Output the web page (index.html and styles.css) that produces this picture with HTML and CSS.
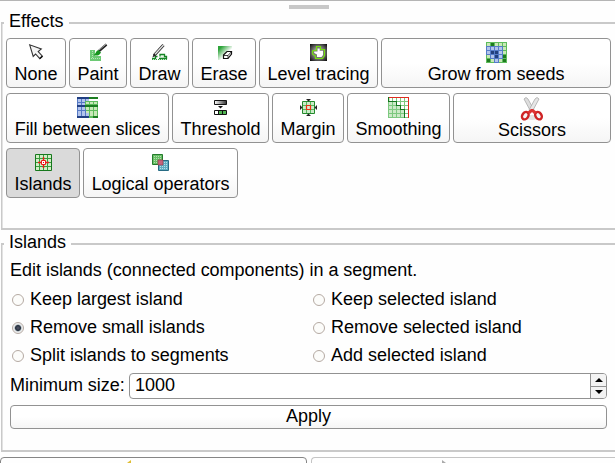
FILE: index.html
```html
<!DOCTYPE html>
<html lang="en">
<head>
<meta charset="utf-8">
<title>Segment effects</title>
<link rel="stylesheet" href="styles.css">
</head>
<body>
<div class="splitter"><span class="grip"></span></div>

<section class="group effects">
  <h2 class="legend">Effects</h2>
  <div class="row r1">
    <button class="tool"><svg width="26" height="25"><path d="M6.7 5.8L10.2 17.5L12.6 15L16.8 19.6L19.4 17.2L15.2 12.6L18.3 10Z" fill="#f4f4f4" stroke="#333" stroke-width="1.1"/><path d="M16.8 19.6L19.4 17.2" stroke="#111" stroke-width="1.4"/></svg>None</button>
    <button class="tool"><svg width="26" height="25"><path d="M5 11H10V17H16V22H5Z" fill="#6cc974"/><path d="M7.5 12V20M6 19.5H16" stroke="#b5e5b5" stroke-dasharray="1 1"/><path d="M14 12L21.5 5.5" stroke="#222" stroke-width="2.4"/><path d="M14 11L21 5.2" stroke="#c9c9c9" stroke-width=".8"/><path d="M8.5 16C11 15 10.7 12 13.3 11L16 13.5C14 17 11.5 17 8.5 16Z" fill="#16931e"/></svg>Paint</button>
    <button class="tool"><svg width="25" height="25"><path d="M5 19.5H8.5V17.5H10.5M13 17.5V15.5H17.5V17.5H19.5V19.5H12" fill="#eaf8e9" stroke="#168526" stroke-width="1.3"/><path d="M5 20.5H20" stroke="#34a542" stroke-dasharray="1 1"/><path d="M7 16.5L16.5 6" stroke="#222" stroke-width="2.8"/><path d="M8 15.2L16.5 6" stroke="#e4e4e4" stroke-width="1.4"/><path d="M5.5 18.2L6.5 15.5L8.5 17Z" fill="#222"/></svg>Draw</button>
    <button class="tool"><svg width="26" height="25"><defs><linearGradient id="erase" x2="1" y2="1"><stop offset=".15" stop-color="#2ea43a"/><stop offset=".6" stop-color="#fff"/></linearGradient></defs><path d="M7 7H21V12L14 21H7Z" fill="url(#erase)"/><path d="M12.5 16L16 12.5H20.5V15L17 19.5H12.5Z" fill="#fff" stroke="#111" stroke-width="1.2"/><path d="M12.5 16.5H17L20.5 12.7M17 16.5V19" fill="none" stroke="#111" stroke-width=".8"/></svg>Erase</button>
    <button class="tool"><svg width="25" height="25"><defs><radialGradient id="trace" r=".7"><stop offset=".35" stop-color="#999"/><stop offset=".95" stop-color="#111"/></radialGradient></defs><path d="M4 5H21V22H4Z" fill="url(#trace)"/><path d="M10.5 7.5H14.5V10.5H18.5V16.5L16.5 19.5H9.5V17L6.5 15V12L10.5 11Z" fill="#777" stroke="#75df12" stroke-width="1.2"/><path d="M11.5 9.5H13.7V11.8H17V16L15.5 18H11V15.5L8.2 14V12.5H11.5Z" fill="#fff"/></svg>Level tracing</button>
    <button class="tool grow"><svg width="26" height="25" shape-rendering="crispEdges"><path d="M3 3H24V24H3Z" fill="#5ebc5c"/><path d="M4 5.5H23M4 9.5H23M4 13.5H23M4 17.5H23M4 21.5H23" stroke="#c9e8b8" stroke-width="3" stroke-dasharray="3 1"/><path d="M3 7H20V20H16V24H11V20H7V16H3Z" fill="#557bc8"/><path d="M4 9.5H19M4 13.5H19M8 17.5H19M12 21.5H15" stroke="#b2c4ec" stroke-width="3" stroke-dasharray="3 1"/><path d="M8 12H11V15H8ZM12 12H15V15H12ZM12 16H15V19H12Z" fill="#23407f"/><path d="M8 4H11V7H8ZM4 20H7V23H4ZM20 16H23V19H20ZM20 20H23V23H20Z" fill="#1d7a1e"/></svg>Grow from seeds</button>
  </div>
  <div class="row r2">
    <button class="tool"><svg width="25" height="25" shape-rendering="crispEdges"><path d="M2 3H14V24H2Z" fill="#5579c4"/><path d="M10 7H23V24H14V15H10Z" fill="#5ebc5c"/><path d="M3 6.5H14M3 9.5H10M3 14.5H10M3 17.5H10M3 20.5H14" stroke="#b2c4ec" stroke-width="3" stroke-dasharray="3 1"/><path d="M11 8.5H22M11 14.5H22M11 17.5H22M15 20.5H22" stroke="#c9e8b8" stroke-width="3" stroke-dasharray="3 1"/><path d="M3 8.5H10M3 16.5H10" stroke="#5579c4"/><path d="M11 7.5H22M11 16.5H22" stroke="#5ebc5c"/><path d="M2 3H14V5H2ZM2 11H10V13H2ZM2 22H14V24H2Z" fill="#213f83"/><path d="M14 3H23V5H14ZM10 11H23V13H10ZM18 22H23V24H18Z" fill="#1b7d20"/></svg>Fill between slices</button>
    <button class="tool"><svg width="25" height="25"><defs><linearGradient id="ramp"><stop stop-color="#fff"/><stop offset="1" stop-color="#333"/></linearGradient></defs><path d="M6.5 6.5H18.5V10.5H6.5Z" fill="url(#ramp)" stroke="#111"/><path d="M10 12H15L12.5 14.5Z" fill="#111"/><path d="M6.5 16.5H18.5V20.5H6.5Z" fill="#fff" stroke="#111"/><path d="M11 17H14V20H11ZM15 17H18V20H15Z" fill="#51b552"/><path d="M10.5 17V20M14.5 17V20" stroke="#111"/></svg>Threshold</button>
    <button class="tool"><svg width="26" height="25"><path d="M7.5 7.5H19.5V19.5H7.5Z" fill="#ccebc9" stroke="#238b2c"/><path d="M11.5 8V19M15.5 8V19M8 11.5H19M8 15.5H19" stroke="#56b75c"/><path d="M11.5 11.5H15.5V15.5H11.5Z" fill="#d8edcf" stroke="#ed3015" stroke-width="1.2"/><path d="M11 5H16L13.5 7.5ZM11 22H16L13.5 19.5ZM5 11V16L7.5 13.5ZM22 11V16L19.5 13.5Z" fill="#222"/></svg>Margin</button>
    <button class="tool"><svg width="25" height="25" shape-rendering="crispEdges"><path d="M2 3H23V24H2Z" fill="#fff"/><path d="M2 3H4V7H10V11H14V15H18V24H2Z" fill="#cce9c7"/><path d="M6.5 4V24M10.5 4V24M14.5 4V24M18.5 4V24M3 7.5H22M3 11.5H22M3 15.5H22M3 19.5H22M2 23.5H22M2.5 4V24" stroke="#7cc87f"/><path d="M2.5 3V7.5H10.5V11.5H14.5V15.5H18.5V23.5" fill="none" stroke="#167620"/><path d="M3 3.5H22.5V23.5" fill="none" stroke="#e12b20"/></svg>Smoothing</button>
    <button class="tool scissors"><svg width="26" height="26"><ellipse cx="13" cy="23.5" rx="6" ry="2.5" fill="#e2e2e2"/><path d="M5 5Q7 2 9 5L15 16L12 18Z" fill="#dedede" stroke="#aaa" stroke-width=".8"/><path d="M20 5Q18 2 16 5L10 16L13 18Z" fill="#e6e6e6" stroke="#aaa" stroke-width=".8"/><ellipse cx="6.3" cy="21.7" rx="3" ry="4" transform="rotate(35 6.3 21.7)" fill="#f4f4f4" stroke="#cf2425" stroke-width="2.4"/><ellipse cx="19.5" cy="21.7" rx="3" ry="4" transform="rotate(-35 19.5 21.7)" fill="#f4f4f4" stroke="#cf2425" stroke-width="2.4"/><path d="M8 18L12 15L14 15L18 18L15 20L13 18L11 20Z" fill="#d33"/></svg>Scissors</button>
  </div>
  <div class="row r3">
    <button class="tool active"><svg width="26" height="25"><path d="M5.5 5.5H21.5V21.5H5.5Z" fill="#d1edc6" stroke="#16781d"/><path d="M9.5 6V21M13.5 6V21M17.5 6V21M6 9.5H21M6 13.5H21M6 17.5H21" stroke="#389c3b"/><path d="M8 13.5H19M13.5 8V19" stroke="#f01818" stroke-width="1.4"/><path d="M11.5 11.5H15.5V15.5H11.5Z" fill="#fff" stroke="#f01818"/><path d="M13 13H14V14H13Z" fill="#e00"/></svg>Islands</button>
    <button class="tool"><svg width="25" height="25"><path d="M4.5 5.5H14.5V15.5H4.5Z" fill="#67bf65" stroke="#247a2c"/><path d="M10.5 11.5H20.5V21.5H10.5Z" fill="#5eadc2" stroke="#276b83"/><path d="M10 11H15V16H10Z" fill="#c6647c" stroke="#963c50" stroke-width=".7"/><path d="M6 7.5H14M6 9.5H14M6 11.5H10M6 13.5H10" stroke="#b5dfb0" stroke-dasharray="1 1"/><path d="M16 13.5H20M16 15.5H20M12 17.5H20M12 19.5H20" stroke="#b8dfe8" stroke-dasharray="1 1"/></svg>Logical operators</button>
  </div>
</section>

<section class="group islands">
  <h2 class="legend">Islands</h2>
  <p class="hint">Edit islands (connected components) in a segment.</p>
  <div class="options">
    <label><i class="radio"></i>Keep largest island</label>
    <label><i class="radio"></i>Keep selected island</label>
    <label><i class="radio checked"></i>Remove small islands</label>
    <label><i class="radio"></i>Remove selected island</label>
    <label><i class="radio"></i>Split islands to segments</label>
    <label><i class="radio"></i>Add selected island</label>
  </div>
  <div class="size">
    <span class="caption">Minimum size:</span>
    <div class="spin">
      <span class="value">1000</span>
      <div class="steps">
        <span><svg width="8" height="4"><path d="M0 4L4 0L8 4Z"/></svg></span>
        <span><svg width="8" height="4"><path d="M0 0L4 4L8 0Z"/></svg></span>
      </div>
    </div>
  </div>
  <button class="apply">Apply</button>
</section>

<footer class="history">
  <div class="undo"><svg width="6" height="4"><path d="M0 3L4 0V4H1Z" fill="#dfbd32"/></svg></div>
  <div class="redo"><svg width="6" height="4"><path d="M0 0L4 3V4H0Z" fill="#aaa"/></svg></div>
</footer>
</body>
</html>
```
FILE: styles.css
```css
* { box-sizing: border-box; }
body {
  margin: 0;
  height: 463px;
  overflow: hidden;
  background: #fefefe;
  color: #000;
  font: 18px/20px "Liberation Sans", Arial, sans-serif;
  letter-spacing: -.02px;
}
svg { display: block; flex: none; overflow: visible; }

.splitter { height: 22px; border-top: 1px solid #b5b5b5; padding: 4px 0 0 289px; }
.grip { display: block; width: 40px; height: 4px; background: #c8c8c8; }

.group {
  margin-left: 1px;
  border: solid #c9c9c9;
  border-width: 2px 0 2px 1px;
  box-shadow: inset 1px 0 #e2e2e2;
}
.effects { height: 208px; }
.islands { height: 209px; margin-top: 13px; }
.legend {
  width: max-content;
  height: 20px;
  margin: -13px 0 0 2px;
  padding: 0 5px;
  background: #fefefe;
  font: inherit;
}

.row { display: grid; gap: 3px; height: 50px; margin: 0 4px 5px; }
.effects .legend + .row { margin-top: 7px; }
.r1 { grid-template-columns: 60px 58px 59px 64px 119px 230px; }
.r2 { grid-template-columns: 163px 97px 72px 103px 158px; }
.r3 { grid-template-columns: 74px 155px; }
.tool, .apply {
  margin: 0;
  padding: 0;
  border: 1px solid #929292;
  border-radius: 4px;
  background: linear-gradient(#fff 50%, #f5f5f5);
  color: inherit;
  font: inherit;
  letter-spacing: inherit;
  white-space: nowrap;
}
.tool { display: flex; flex-direction: column; align-items: center; }
.active { background: #dadada; }

.hint { margin: 8px 0 0 8px; }
.options {
  display: grid;
  grid-template-columns: 301px 1fr;
  grid-auto-rows: 28px;
  margin: 5px 0 0 10px;
}
.options label { display: flex; align-items: center; gap: 6px; }
.radio {
  width: 12px;
  height: 12px;
  margin-top: 1px;
  border: 1px solid #b5aaa3;
  border-radius: 50%;
  background: #fcfcfa;
}
.checked { background: radial-gradient(circle, #556 0, #253240 2.5px, #dce0e2 3.7px, #f5f5f5 5px); }

.size { display: flex; height: 26px; margin: 4px 8px 0; }
.caption { width: 119px; padding-top: 2px; }
.spin { display: flex; flex: 1; border: 1px solid #929292; border-radius: 4px; background: #fff; }
.value { flex: 1; padding: 1px 0 0 5px; }
.steps { display: flex; flex-direction: column; width: 16px; border-left: 1px solid #929292; border-radius: 0 3px 3px 0; background: #f3f3f3; }
.steps span { display: flex; flex: 1; align-items: center; justify-content: center; }
.steps span + span { border-top: 1px solid #929292; }
.apply { display: block; width: 597px; height: 24px; margin: 6px 0 0 8px; padding-bottom: 2px; }

.history { display: flex; gap: 4px; height: 20px; margin-top: 5px; }
.history div { border: 1px solid #858585; border-radius: 4px; padding-top: 2px; }
.undo { width: 307px; padding-left: 126px; }
.history .redo { flex: 1; padding-left: 130px; border-color: #c4c4c4; border-right: 0; border-radius: 4px 0 0 0; }
```
